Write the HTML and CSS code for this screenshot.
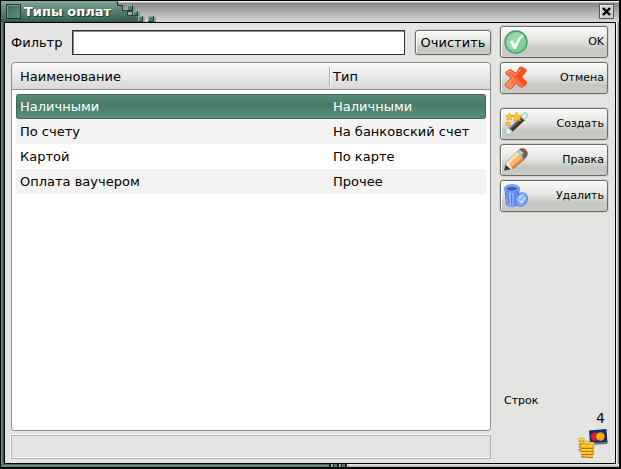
FILE: index.html
```html
<!DOCTYPE html>
<html lang="ru">
<head>
<meta charset="utf-8">
<title>Типы оплат</title>
<link rel="stylesheet" href="styles.css">
</head>
<body>
<div class="window">
  <header class="titlebar">
    <div class="title-tab">
      <span class="window-menu"></span>
      <h1>Типы оплат</h1>
    </div>
    <svg class="title-pixels" width="42" height="21" viewBox="0 0 42 21" shape-rendering="crispEdges" aria-hidden="true">
      <defs><linearGradient id="tab" x2="0" y2="21" gradientUnits="userSpaceOnUse"><stop stop-color="#789c90"/><stop offset="1" stop-color="#36594e"/></linearGradient></defs>
      <path fill="#777" opacity=".6" d="M3 1H4V5H8V9H7V5H3ZM18 6H20V12H14V10H18ZM23 11H25V16H23ZM28 16H30V21H28ZM39 16H41V21H39Z"/>
      <path fill="url(#tab)" d="M0 0H2V4H7V9H12V15H23V21H0Z"/>
      <path fill="#263f36" d="M2 0H3V4H8V9H12V10H7V5H2ZM12 4H18V10H12ZM12 10H18V15H12ZM18 10H23V15H18ZM23 15H28V21H23ZM33 15H39V21H33Z"/>
      <path fill="#8cad9f" d="M12 4H17V9H12ZM18 10H22V14H18ZM23 15H27V20H23ZM33 15H38V20H33Z"/>
      <path fill="#4b7b6a" d="M13 5H17V9H13ZM19 11H22V14H19ZM24 16H27V20H24ZM34 16H38V20H34Z"/>
      <path fill="#a4aaa7" d="M13 11H17V14H13Z"/>
    </svg>
    <button class="close" type="button" aria-label="Закрыть">
      <svg width="9" height="9" viewBox="0 0 9 9"><path d="M1 1L8 8M8 1L1 8" stroke="#000" stroke-width="2.4"/></svg>
    </button>
  </header>
  <div class="content">
    <main class="main">
      <div class="filter">
        <label for="filter">Фильтр</label>
        <input id="filter" type="text">
        <button class="button clear" type="button">Очистить</button>
      </div>
      <div class="list">
        <table>
          <thead><tr><th>Наименование</th><th class="type">Тип</th></tr></thead>
          <tbody>
            <tr class="selected"><td>Наличными</td><td>Наличными</td></tr>
            <tr><td>По счету</td><td>На банковский счет</td></tr>
            <tr><td>Картой</td><td>По карте</td></tr>
            <tr><td>Оплата ваучером</td><td>Прочее</td></tr>
          </tbody>
        </table>
      </div>
      <div class="status"></div>
    </main>
    <aside class="side">
      <button class="button action" type="button">
        <svg width="24" height="24" viewBox="0 0 24 24" aria-hidden="true">
          <defs><linearGradient id="ok" x2="1" y2="1"><stop stop-color="#72bd91"/><stop offset=".5" stop-color="#86d59c"/><stop offset="1" stop-color="#70c98d"/></linearGradient></defs>
          <circle cx="12" cy="12" r="11" fill="url(#ok)" stroke="#489b67" stroke-width="1.4"/>
          <path d="M2.5 12A9.5 9.5 0 0 1 21 9Q12 9 7 19Q3 17 2.500 12Z" fill="#b7e5c3" opacity=".4"/>
          <path d="M5.500 11.500L8.500 10L11 14.500Q13 9 18 4.500L19 5.500Q14.500 12 12 19H9.500Q8 15 5.500 11.500Z" fill="#fff"/>
        </svg>
        <span>OK</span>
      </button>
      <button class="button action" type="button">
        <svg width="24" height="24" viewBox="0 0 24 24" aria-hidden="true">
          <defs><linearGradient id="no" x1="0" y1="1" x2="1" y2="0"><stop stop-color="#ffa052"/><stop offset=".45" stop-color="#ff7342"/><stop offset=".6" stop-color="#ff4717"/><stop offset="1" stop-color="#ff5a32"/></linearGradient></defs>
          <path d="M2 6L6.500 3.500L12 7.500L15.500 1.500L17.500 1L22 3.500V5.500L17.500 11L22 15.500L22.500 18L18.500 21H16.500L12 17L8 22L6 23L1.500 20V18L7 12L2 8Z" fill="url(#no)" stroke="#e34b27" stroke-width="1"/>
          <path d="M3 7L6 5L12 9L16.500 3M3 18.500L9 12" fill="none" stroke="#ffad91" stroke-width="1"/>
        </svg>
        <span>Отмена</span>
      </button>
      <button class="button action group-start" type="button">
        <svg width="24" height="24" viewBox="0 0 24 24" aria-hidden="true">
          <defs><linearGradient id="wand" x1=".25" y1=".25" x2=".75" y2=".75"><stop stop-color="#333"/><stop offset=".3" stop-color="#aaa"/><stop offset=".5" stop-color="#444"/><stop offset="1" stop-color="#111"/></linearGradient></defs>
          <path d="M3 17L17 4L21 8L7 21Z" fill="url(#wand)"/>
          <path d="M1.500 18L4 15.500L8.500 19.500L6 22.500Q4 23.500 2 21.500Q0.500 20 1.500 18ZM16.500 4L19 1.500Q21 0 23 1.500Q24 3.500 22.500 5.500L20 8Z" fill="#dceff5" stroke="#91a9b1" stroke-width=".8"/>
          <path d="M12.500 0L14.200 3.200L18 3.500L15.500 6L16.500 9L13 7.700L10 9.500L10.300 6L8 3.500L11.300 3.300ZM5.500 1L6.500 3L9 3.500L7 5.500L7.500 8L5.200 7L3 8.200V5.500L1.500 4L4.200 3.300ZM4 9L4.800 10.500L6.500 10.800L5.300 12L5.500 14L3.800 13L2 13.700L2.500 12L1.300 10.500L3.100 10.500Z" fill="#ffc425" stroke="#dc9800" stroke-width=".6"/>
        </svg>
        <span>Создать</span>
      </button>
      <button class="button action" type="button">
        <svg width="24" height="24" viewBox="0 0 24 24" aria-hidden="true">
          <path d="M.5 22L2.500 14L15 2Q18 0 21 1.500Q24 4 22.500 8L20.500 11L9 20.500Z" fill="#e88e42" stroke="#94602f" stroke-width=".9"/>
          <path d="M2.500 14L13.500 3.500L16 6L5 16.500Z" fill="#ffe0b5"/>
          <path d="M5 16.500L16 6L19 9L7.500 19Z" fill="#ffb873"/>
          <path d="M1 22L2.500 14L5 15L6 18L9 20.500Z" fill="#ffe9c8"/>
          <path d="M.5 22.500L1.700 17L6.500 21Z" fill="#243269"/>
          <path d="M13.500 3.500L15.500 1.500Q20 3.500 22 8.700L19.500 11.500Q18 6 13.500 3.500Z" fill="#1689b7"/>
          <path d="M13.500 3.500L15.500 1.500Q18.500 3 20 5L17.500 7Q16 5 13.500 3.500Z" fill="#8fd9ec"/>
          <path d="M16 1.300Q20-.5 22.500 3Q24 6 22.200 8.500Q20.500 4 16 1.300Z" fill="#b94c3c" stroke="#74372d" stroke-width=".7"/>
        </svg>
        <span>Правка</span>
      </button>
      <button class="button action" type="button">
        <svg width="24" height="24" viewBox="0 0 24 24" aria-hidden="true">
          <defs><linearGradient id="bin"><stop stop-color="#5a88f0"/><stop offset=".35" stop-color="#aac8ff"/><stop offset="1" stop-color="#4779ec"/></linearGradient></defs>
          <path d="M1 5H15L14 21Q8 24 2.500 21Z" fill="url(#bin)" stroke="#5d82e8"/>
          <path d="M4 9L5 20M7.500 10V21M11 9.500L10.500 20.500" stroke="#537cf0" stroke-width="1.300"/>
          <ellipse cx="8" cy="4.500" rx="7.500" ry="3.700" fill="#8fb4ff" stroke="#5278e3"/>
          <ellipse cx="8" cy="4.700" rx="5.500" ry="2" fill="#345dc6"/>
          <ellipse cx="17.500" cy="15.500" rx="5.800" ry="7" transform="rotate(28 17.500 15.500)" fill="#7ba7ff" stroke="#5c84ed"/>
          <path d="M13.500 16Q15 10.500 20 10Q20 13 13.500 16Z" fill="#b9d2ff"/>
          <path d="M15 16L17.500 18.500L21 13.500" fill="none" stroke="#d9e6ff" stroke-width="1.500"/>
        </svg>
        <span>Удалить</span>
      </button>
      <div class="summary">
        <span class="summary-label">Строк</span>
        <output class="count">4</output>
        <svg class="money" width="30" height="30" viewBox="0 0 30 30" aria-hidden="true">
          <path d="M11 1.500L28.500 0L29.500 14L12 15Z" fill="#172b6f"/>
          <path d="M12 14L29 13L29.500 15L13 16Z" fill="#6f7588"/>
          <circle cx="17" cy="7.500" r="4.200" fill="#e11b22"/><circle cx="22.500" cy="7.500" r="4.200" fill="#f7a800"/>
          <path d="M19.700 4.500Q17.500 7.500 19.700 10.500Q21.700 7.500 19.700 4.500Z" fill="#edcf32"/>
          <path d="M1 10H6V23H1ZM7 13H16V26H7ZM3 17H9V28H3ZM9 17H15V29H9Z" fill="#f2bd24"/>
          <path d="M0.500 12H6M0.500 15H6M0.500 18H3M0.500 21H3M15 18H16M15 21H16M15 24H16M3 19.500H8.500M3 22.500H8.500M3 25.500H8.500M3 28H8.500M9 19.500H15M9 22.500H15M9 25.500H15M9 28.500H15" stroke="#a97500" stroke-width="1"/>
          <path d="M1 13.500H5M4 21H7.500M4 24H7.500M10 21H13.500M10 24H13.500M10 27H13.500" stroke="#ffe46c" stroke-width="1"/>
          <g fill="#ffdc54" stroke="#bd8500" stroke-width=".5"><ellipse cx="3.500" cy="10.500" rx="3" ry="1.500"/><ellipse cx="8.500" cy="13.500" rx="3" ry="1.500"/><ellipse cx="13.500" cy="14.500" rx="3" ry="1.500"/><ellipse cx="6" cy="16.500" rx="3" ry="1.500"/><ellipse cx="12" cy="17" rx="3" ry="1.500"/></g>
        </svg>
      </div>
    </aside>
  </div>
  <div class="bottom-edge"><span></span><span></span></div>
</div>
</body>
</html>
```
FILE: styles.css
```css
* { box-sizing: border-box; }

body {
  margin: 0;
  background: #000;
  color: #000;
  font: 13px/16px "DejaVu Sans", sans-serif;
}

button, input { font: inherit; color: inherit; }

.window {
  display: flex;
  flex-direction: column;
  min-height: 100vh;
  border: 1px solid #000;
  border-width: 1px 2px 2px 1px;
  background:
    linear-gradient(90deg, #689384 0 1px, #4b7869 1px 2px, #36594e 2px 3px) left / 3px 100% no-repeat,
    linear-gradient(90deg, #eee 0 1px, #c4c4c4 1px 2px, #8d8d8d 2px 3px) right / 3px 100% no-repeat;
}

.titlebar {
  display: flex;
  height: 21px;
  flex: none;
  background: linear-gradient(#eee 0 1px, #868686 2px, #d4d4d4 20px);
}

.title-tab {
  display: flex;
  align-items: center;
  gap: 3px;
  padding: 0 4px 0 5px;
  background: linear-gradient(#83aa9c 0 1px, #789c90 2px, #3b6556 19px, #315449);
}

.window-menu {
  width: 15px;
  height: 15px;
  border: 1px solid #1e3931;
  background: linear-gradient(135deg, #3c6658, #62917f);
  box-shadow: inset 1px 1px #75988b;
}

h1 {
  margin: 0;
  color: #fff;
  font-size: 13px;
  line-height: 16px;
  text-shadow: 1px 1px 1px #1b362d;
}

.close {
  display: grid;
  place-items: center;
  width: 15px;
  height: 15px;
  margin: 3px 5px 0 auto;
  padding: 0;
  border: 1px solid #555;
  background: #ccc;
  box-shadow: inset 1px 1px #eee;
}

.content {
  display: flex;
  flex: 1;
  gap: 9px;
  margin: 0 3px;
  padding: 3px 7px 4px 6px;
  border: 1px solid #000;
  background: #e4e4e2;
}

.main {
  display: flex;
  flex: 1;
  flex-direction: column;
  min-width: 0;
}

.filter {
  display: flex;
  align-items: center;
  gap: 10px;
  padding: 4px 0 7px;
}

.filter input {
  flex: 1;
  min-width: 0;
  height: 25px;
  padding: 0 4px;
  border: 1px solid #333;
  border-radius: 0;
  background: #fff;
  box-shadow: inset 1px 1px #888;
}

.button {
  border: 1px solid #6b6c68;
  border-radius: 3px;
  background: linear-gradient(#fbfbfa, #e4e5e2 45%, #c5c7c2 75%, #cacbc7);
  box-shadow: inset 1px 1px #fff, 0 0 0 1px #d2d2d0;
}

.clear { width: 76px; height: 25px; padding: 0; }

.list {
  flex: 1;
  padding: 0 4px;
  border: 1px solid #8e8e8c;
  border-radius: 4px 4px 3px 3px;
  background:
    linear-gradient(#fafafa, #e2e2e0 18px, #d8d8d6 26px, #8e8e8c 26px) top / 100% 27px no-repeat,
    #fff;
}

table { width: 100%; border-spacing: 0; table-layout: fixed; }
th, td { padding: 0 4px; text-align: left; font-weight: normal; }
th { height: 27px; }
td { height: 25px; }
.type {
  width: 157px;
  background:
    linear-gradient(90deg, #aaa 0 1px, #fff 1px) 0 4px / 2px 20px no-repeat;
}
tbody::before { display: block; height: 4px; content: ""; }
tbody tr:nth-child(even) { background: #f3f3f3; }
tbody .selected { color: #fff; }

.selected td {
  border: solid #3e6a5b;
  border-width: 1px 0;
  background: linear-gradient(#578c79, #4c7a69 45%, #5a907e);
}

.selected td:first-child { border-left-width: 1px; border-radius: 3px 0 0 3px; padding-left: 3px; }
.selected td:last-child { border-right-width: 1px; border-radius: 0 3px 3px 0; }

.status {
  height: 24px;
  margin-top: 4px;
  border: 1px solid #b0b0ae;
  box-shadow: inset 0 -1px #fff, 0 -1px #fff, -1px 0 #fff;
}

.side {
  display: flex;
  flex-direction: column;
  gap: 4px;
  width: 108px;
  font-size: 11px;
}

.action {
  display: flex;
  align-items: center;
  justify-content: space-between;
  height: 32px;
  padding: 0 3px;
}

.group-start { margin-top: 10px; }

.summary {
  display: flex;
  flex-direction: column;
  align-items: flex-end;
  margin-top: auto;
}

.summary-label { align-self: flex-start; padding-left: 4px; }
.count { padding-right: 3px; font-size: 14px; line-height: 18px; }
.money { margin-top: 2px; }

.bottom-edge {
  display: flex;
  height: 3px;
  background: linear-gradient(#eee, #aaa);
}

.bottom-edge span:first-child { width: 53%; background: linear-gradient(#36594e, #689384, #4b7869); }
.bottom-edge span:last-child { width: 18px; background: repeating-linear-gradient(90deg, #222 0 2px, #aaa 2px 4px, #222 4px 5px, #48796a 5px 8px); }
```
